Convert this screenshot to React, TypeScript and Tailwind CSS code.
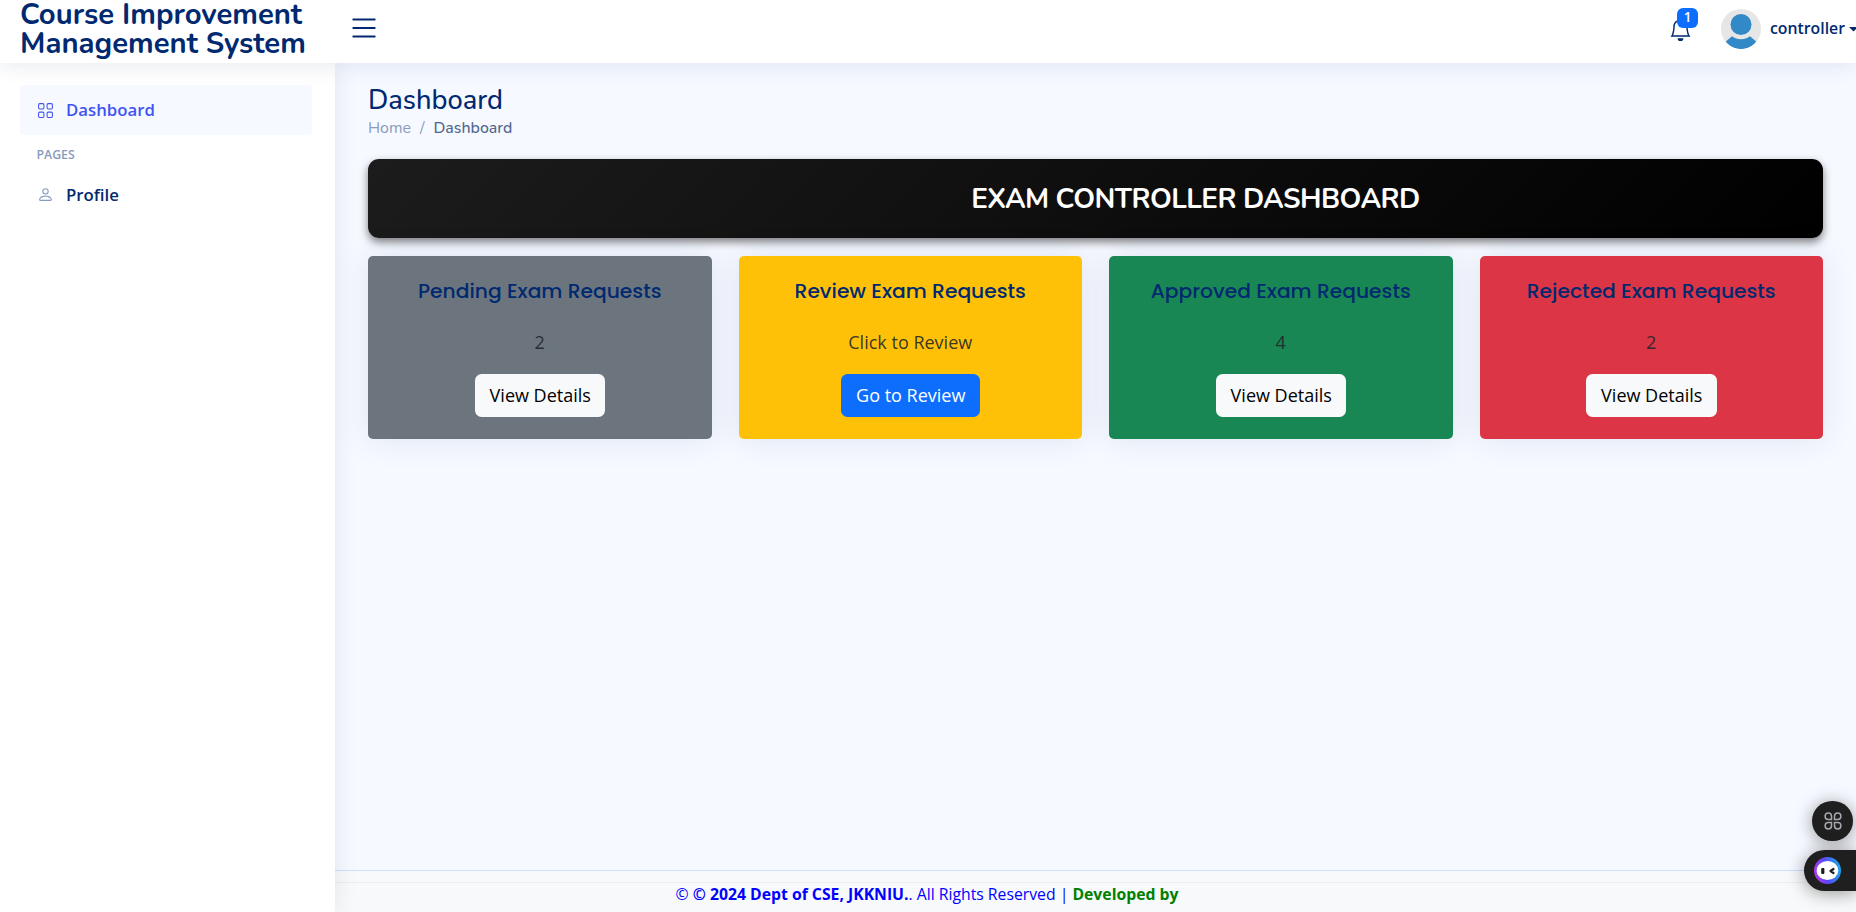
import { BsBell, BsGrid, BsList, BsPerson } from "react-icons/bs";

type RequestCard = {
  title: string;
  value: string;
  action: string;
  background: string;
  button: string;
};

const cards: RequestCard[] = [
  { title: "Pending Exam Requests", value: "2", action: "View Details", background: "bg-[#6c757d]", button: "w-[130px] bg-[#f8f9fa] text-black" },
  { title: "Review Exam Requests", value: "Click to Review", action: "Go to Review", background: "bg-[#ffc107]", button: "w-[139px] bg-[#0d6efd] text-white font-medium" },
  { title: "Approved Exam Requests", value: "4", action: "View Details", background: "bg-[#198754]", button: "w-[130px] bg-[#f8f9fa] text-black" },
  { title: "Rejected Exam Requests", value: "2", action: "View Details", background: "bg-[#dc3545]", button: "w-[131px] bg-[#f8f9fa] text-black" },
];

function Avatar() {
  return (
    <svg className="size-10" viewBox="0 0 40 40">
      <defs>
        <clipPath id="avatar-clip"><circle cx="20" cy="20" r="20" /></clipPath>
      </defs>
      <circle cx="20" cy="20" r="20" fill="#e6e6e6" />
      <g clipPath="url(#avatar-clip)" fill="#3289c8">
        <circle cx="20" cy="15.5" r="10.5" />
        <path d="M4.8 32.5 11 27.2c5 4 13 4 18 0l6.2 5.3C31 38 26 40 20 40S9 38 4.8 32.5Z" />
      </g>
    </svg>
  );
}

function Header() {
  return (
    <header className="relative z-20 flex h-[63px] shrink-0 items-center bg-white pl-5 shadow-[0_2px_22px_rgba(1,41,112,0.1)]">
      <div className="w-[327px] whitespace-pre-line pb-[5px] font-['Nunito','Lato',sans-serif] text-[29.25px] font-bold leading-[29px] text-[#012970]">
        {"Course Improvement\nManagement System"}
      </div>
      <BsList className="-mt-[7px] size-[34px] text-[#012970]" />
      <div className="-mt-[5px] ml-auto flex items-center">
        <div className="relative mr-[29px]">
          <BsBell className="size-[23px] text-[#012970]" />
          <span className="absolute -top-[10px] left-[8px] flex h-5 w-[21px] items-center justify-center rounded-md bg-[#0d6efd] pb-px font-['Open_Sans',sans-serif] text-[13.5px] font-semibold text-white">1</span>
        </div>
        <Avatar />
        <span className="ml-[9px] w-[79px] whitespace-nowrap font-['Open_Sans',sans-serif] text-[15.8px] font-semibold text-[#012970]">controller</span>
        <svg className="h-[5px] w-[7px]" viewBox="0 0 7 5"><path d="M0 0h9L4.5 4.5Z" fill="#012970" /></svg>
      </div>
    </header>
  );
}

function Sidebar() {
  return (
    <aside className="relative z-10 w-[335px] shrink-0 bg-white pl-5 pt-[22px] shadow-[0_0_22px_rgba(1,41,112,0.1)]">
      <a className="flex h-[50px] w-[292px] items-center rounded bg-[#f6f9ff] pl-[17px] text-[16.75px] font-semibold text-[#4154f1]">
        <BsGrid className="mr-3 size-[17px]" />
        Dashboard
      </a>
      <div className="mt-[11px] pl-[16.5px] text-[12.3px] font-semibold leading-[18px] text-[#899bbd]">PAGES</div>
      <a className="mt-[6px] flex h-[50px] w-[292px] items-center pl-[17px] text-[16.75px] font-semibold text-[#012970]">
        <BsPerson className="-mt-[2px] mr-3 size-[17px] text-[#899bbd]" />
        Profile
      </a>
    </aside>
  );
}

function Card({ card }: { card: RequestCard }) {
  return (
    <section className={`flex h-[183px] flex-1 flex-col items-center rounded-[5px] pt-[19px] shadow-[0_0_33px_rgba(1,41,112,0.1)] ${card.background}`}>
      <h5 className="whitespace-nowrap font-['Poppins','Lato',sans-serif] text-[20.25px] font-medium leading-8 text-[#012970]">{card.title}</h5>
      <p className="mt-[21px] text-[18px] leading-[28px] text-[#212529]/90">{card.value}</p>
      <button className={`mt-[18px] flex h-[43px] items-center justify-center whitespace-nowrap rounded-[6.5px] pl-px text-[18px] ${card.button}`}>{card.action}</button>
    </section>
  );
}

function AssistantLogo() {
  return (
    <svg className="size-[27px]" viewBox="0 0 27 27">
      <defs>
        <linearGradient id="ring" x1="0" y1="0.7" x2="1" y2="0.5">
          <stop offset="0" stopColor="#b838ee" />
          <stop offset="0.45" stopColor="#5a46f5" />
          <stop offset="1" stopColor="#18a8e8" />
        </linearGradient>
      </defs>
      <circle cx="13.5" cy="13.5" r="13.5" fill="url(#ring)" />
      <ellipse cx="13.5" cy="13.5" rx="10.8" ry="9.6" fill="#fff" />
      <rect x="7.2" y="11" width="3.2" height="6" rx="1" fill="#1b1b22" />
      <path d="m19.5 12-3 2 3 2" fill="none" stroke="#1b1b22" strokeWidth="2.2" strokeLinecap="round" strokeLinejoin="round" />
    </svg>
  );
}

function FloatingTools() {
  return (
    <div className="absolute bottom-[21px] right-0 z-30 flex flex-col items-end gap-[9px]">
      <div className="mr-[3px] flex h-10 w-[41px] items-center justify-center rounded-full bg-[#1f1f1f] shadow-[0_2px_18px_rgba(0,0,0,0.4)]">
        <svg className="size-[18px]" viewBox="0 0 18 18" fill="none" stroke="#a9a6ad" strokeWidth="1.5">
          <path d="M7.5 7.5H4.3a3.2 3.2 0 1 1 3.2-3.2ZM10.5 7.5V4.3a3.2 3.2 0 1 1 3.2 3.2ZM7.5 10.5v3.2a3.2 3.2 0 1 1-3.2-3.2ZM10.5 10.5h3.2a3.2 3.2 0 1 1-3.2 3.2Z" />
        </svg>
      </div>
      <div className="flex h-[41px] w-[52px] items-center rounded-l-full bg-[#1f1f1f] pl-[10px] shadow-[0_2px_18px_rgba(0,0,0,0.4)]">
        <AssistantLogo />
      </div>
    </div>
  );
}

export default function App() {
  return (
    <div className="relative flex h-[912px] w-[1856px] flex-col overflow-hidden bg-[#f6f9ff] font-['Open_Sans','Noto_Sans',sans-serif]">
      <Header />
      <div className="flex min-h-0 flex-1">
        <Sidebar />
        <div className="flex min-w-0 flex-1 flex-col">
          <main className="flex-1 pl-[33px] pr-[33px] pt-[22px]">
            <h1 className="font-['Nunito','Lato',sans-serif] text-[27.2px] font-medium leading-8 text-[#012970]">Dashboard</h1>
            <nav className="flex h-[24px] items-center gap-[9px] font-['Nunito','Lato',sans-serif] text-[15.9px] text-[#899bbd]">
              <span>Home</span>
              <span>/</span>
              <span className="font-medium text-[#51678f]">Dashboard</span>
            </nav>
            <div className="mt-[18px] flex h-[79px] items-center justify-center rounded-[11px] bg-[linear-gradient(135deg,#1c1c1c,#000000)] pl-[200px] pt-[2px] shadow-[0_4px_9px_rgba(0,0,0,0.5)]">
              <h2 className="whitespace-nowrap font-['Nunito','Lato',sans-serif] text-[27.8px] font-bold tracking-[-0.55px] text-white">EXAM CONTROLLER DASHBOARD</h2>
            </div>
            <div className="mt-[18px] flex gap-[27px]">
              {cards.map((card) => <Card key={card.title} card={card} />)}
            </div>
          </main>
          <footer className="h-[42px] border-t border-[#cddfff] bg-[#f8f9fa] pt-[11px]">
            <div className="flex justify-center whitespace-pre border-t border-[#ebedf0] pr-[337px] text-[15.75px] leading-[22px] text-[#0000ff]">
              <span>© </span><span className="font-bold">© 2024 Dept of CSE, JKKNIU.</span><span>. All Rights Reserved | </span><span className="font-bold text-[#008000]">Developed by</span>
            </div>
          </footer>
        </div>
      </div>
      <FloatingTools />
    </div>
  );
}
